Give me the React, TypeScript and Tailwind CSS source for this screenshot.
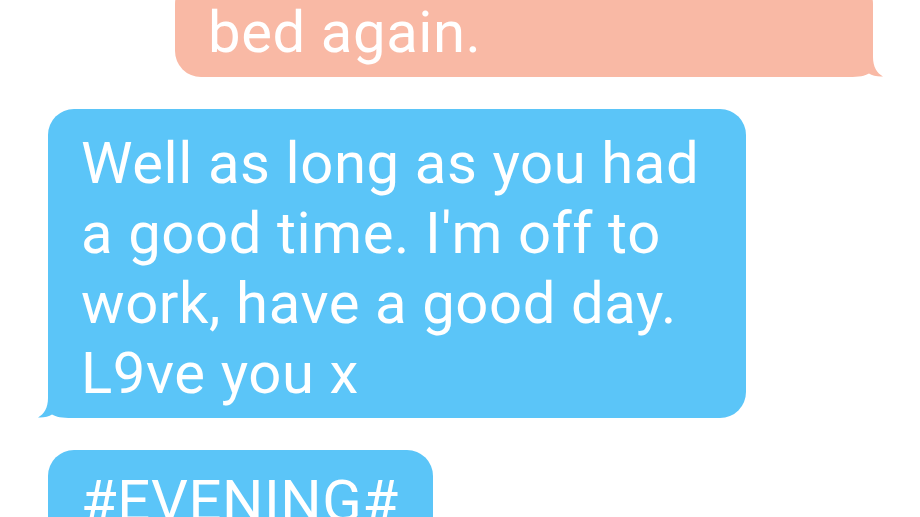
import React from "react";

const BLUE = "#5BC5F8";
const PEACH = "#F9B9A5";

function LeftTail() {
  return (
    <svg className="absolute left-[-10px] bottom-0" width="40" height="30" viewBox="0 0 40 30">
      <path d="M10,0 L10,10 C10,20 6,26 0,29.5 C5,30 11,28.5 14,26.5 C18,29 24,30 34,30 L40,30 L40,0 Z" fill={BLUE} />
    </svg>
  );
}

function RightTail() {
  return (
    <svg className="absolute right-[-10px] bottom-0" width="40" height="30" viewBox="0 0 40 30">
      <path d="M30,0 L30,10 C30,20 34,26 40,29.5 C35,30 29,28.5 26,26.5 C22,29 16,30 6,30 L0,30 L0,0 Z" fill={PEACH} />
    </svg>
  );
}

export default function App() {
  return (
    <div
      className="w-[920px] h-[517px] bg-white overflow-hidden flex flex-col text-white text-[58px] leading-[70px] tracking-[0.6px]"
      style={{ fontFamily: "Roboto, 'Noto Sans', sans-serif" }}
    >
      <div className="relative self-end mr-[47px] mt-[-22px] w-[698px] bg-[#F9B9A5] rounded-[26px] pl-[33px] pr-[33px] pt-[19px] pb-[10px]">
        <div className="relative z-10">bed again.</div>
        <RightTail />
      </div>
      <div className="relative ml-[48px] mt-[32px] w-[698px] bg-[#5BC5F8] rounded-[26px] pl-[33px] pr-[20px] pt-[19px] pb-[10px]">
        <div className="relative z-10 whitespace-nowrap">
          Well as long as you had
          <br />
          a good time. I'm off to
          <br />
          work, have a good day.
          <br />
          L9ve you x
        </div>
        <LeftTail />
      </div>
      <div className="relative ml-[48px] mt-[32px] w-fit bg-[#5BC5F8] rounded-[26px] pl-[33px] pr-[34px] pt-[16px] pb-[10px]">
        <div className="whitespace-nowrap">#EVENING#</div>
      </div>
    </div>
  );
}
